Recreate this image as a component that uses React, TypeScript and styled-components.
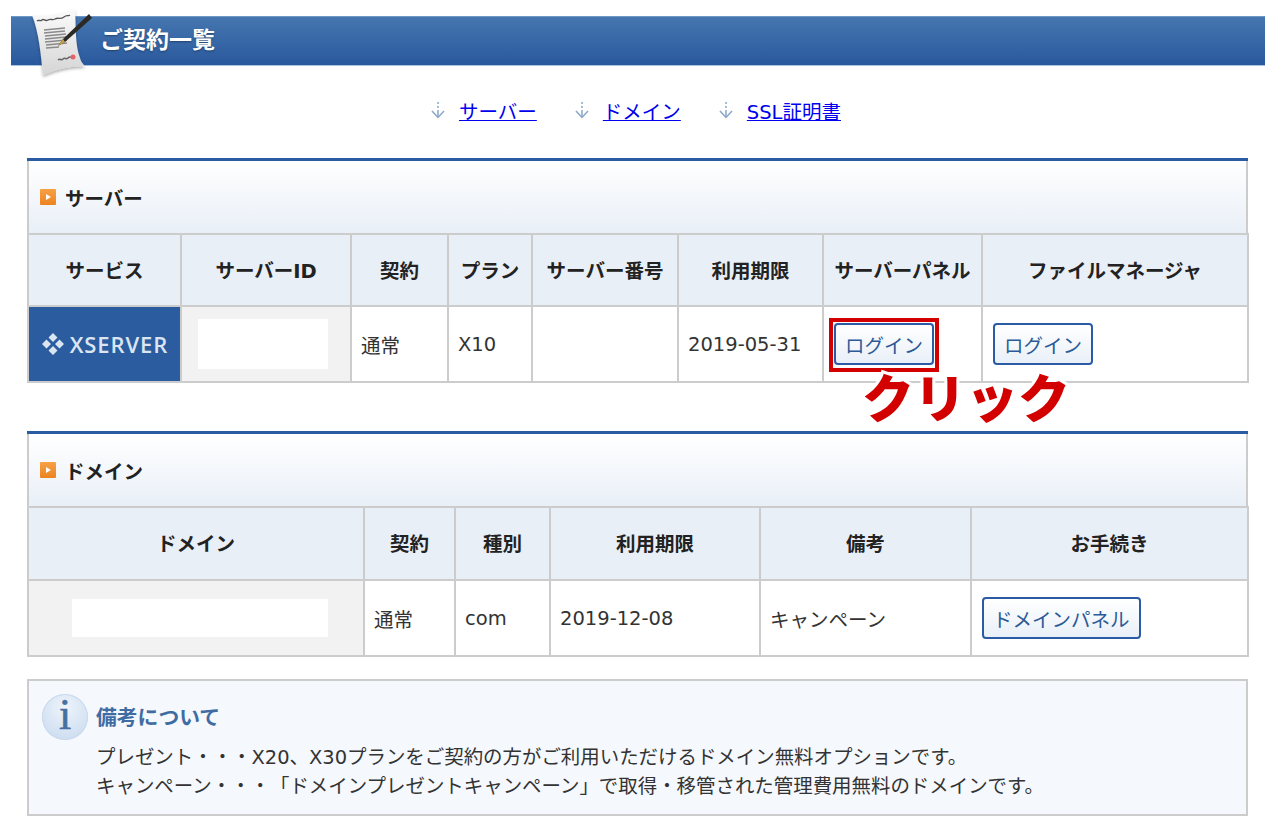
import React, { FC } from 'react';
import styled, { createGlobalStyle } from 'styled-components';

const GlobalStyle = createGlobalStyle`
  html, body {
    margin: 0;
    padding: 0;
    background: #fff;
  }
  body {
    font-family: "DejaVu Sans", "Noto Sans CJK JP", sans-serif;
    font-size: 19.5px;
    color: #333;
    text-spacing-trim: space-all;
  }
`;

const Page = styled.div`
  width: 1280px;
  height: 838px;
  padding-top: 16px;
  box-sizing: border-box;
  overflow: hidden;
`;

const HeaderBand = styled.header`
  position: relative;
  display: flex;
  align-items: center;
  height: 50px;
  margin: 0 15px 0 11px;
  padding: 0 0 6px 89px;
  box-sizing: border-box;
  background: linear-gradient(#4676af, #29599d);
  border-top: 1px solid #6f96c4;
  border-bottom: 1px solid #a9c2de;
`;

const HeaderTitle = styled.h1`
  margin: 0;
  font-size: 23px;
  font-weight: 700;
  color: #fff;
  text-shadow: 0 1px 2px rgba(0, 0, 0, 0.35);
`;

const HeaderIcon = styled.svg`
  position: absolute;
  left: 18px;
  top: -9px;
`;

const AnchorNav = styled.nav`
  display: flex;
  justify-content: center;
  gap: 38px;
  height: 92px;
  padding: 30px 8px 0 0;
  box-sizing: border-box;
`;

const AnchorItem = styled.div`
  display: flex;
  align-items: center;
  gap: 14px;
  height: 28px;
`;

const AnchorLink = styled.a`
  color: #0000ee;
  text-decoration: underline;
  font-size: 19.5px;
`;

const Content = styled.main`
  width: 1221px;
  margin-left: 27px;
`;

const Section = styled.section<{ $gap: number }>`
  margin-bottom: ${({ $gap }) => $gap}px;
  border-top: 3px solid #2a5ba3;
`;

const SectionTitle = styled.div`
  display: flex;
  align-items: center;
  gap: 9px;
  height: 72px;
  padding-left: 11px;
  box-sizing: border-box;
  background: linear-gradient(#fff, #e9eff7);
  border-left: 2px solid #ccc;
  border-right: 2px solid #ccc;
`;

const SectionName = styled.h2`
  margin: 0;
  font-size: 19.5px;
  font-weight: 700;
  color: #222;
`;

const OrangeMark = styled.span`
  display: flex;
  align-items: center;
  justify-content: center;
  width: 16px;
  height: 16px;
  border-radius: 1px;
  background: linear-gradient(#f6a145, #ec8320);
  &::after {
    content: '';
    border-left: 5px solid #fff;
    border-top: 3px solid transparent;
    border-bottom: 3px solid transparent;
  }
`;

const Table = styled.table`
  width: calc(100% - 1px);
  table-layout: fixed;
  border-collapse: collapse;
`;

const HeadCell = styled.th<{ $height: number }>`
  height: ${({ $height }) => $height}px;
  padding: 0 0 2px;
  text-align: center;
  font-size: 19.5px;
  font-weight: 700;
  color: #222;
  background: #e9eff7;
  border: 2px solid #ccc;
`;

const Cell = styled.td<{ $tone?: 'plain' | 'brand' | 'masked' }>`
  position: relative;
  height: 74px;
  padding: 0 9px;
  font-size: 19.5px;
  color: #333;
  white-space: nowrap;
  border: 2px solid #ccc;
  background: ${({ $tone }) =>
    $tone === 'brand' ? '#2a5c9f' : $tone === 'masked' ? '#f2f2f2' : '#fff'};
`;

const Mask = styled.div<{ $width: number; $height: number; $left: number }>`
  width: ${({ $width }) => $width}px;
  height: ${({ $height }) => $height}px;
  margin-left: ${({ $left }) => $left}px;
  background: #fff;
`;

const Logo = styled.div`
  display: flex;
  align-items: center;
  justify-content: center;
  gap: 5px;
  font-family: "Open Sans", sans-serif;
  font-size: 22px;
  font-weight: 600;
  letter-spacing: 0.9px;
  color: #dbe5f1;
`;

const PanelButton = styled.button`
  display: inline-block;
  height: 42px;
  margin-left: 1px;
  padding: 0 9px;
  font-family: inherit;
  font-size: 19.5px;
  color: #2c5a97;
  background: linear-gradient(#fff, #e9f0f8);
  border: 2px solid #2a5ba3;
  border-radius: 4px;
  white-space: nowrap;
`;

const ClickFrame = styled.span`
  position: absolute;
  left: 5px;
  top: 11px;
  width: 102px;
  height: 46px;
  border: 4px solid #d30000;
  pointer-events: none;
`;

const ClickLabel = styled.span`
  position: absolute;
  left: 38px;
  top: 55px;
  z-index: 2;
  font-family: "Noto Sans CJK JP", sans-serif;
  font-size: 52px;
  font-weight: 900;
  line-height: 68px;
  color: #d30000;
  -webkit-text-stroke: 6px #fff;
  paint-order: stroke fill;
`;

const InfoBox = styled.aside`
  display: flex;
  gap: 8px;
  height: 137px;
  padding: 13px 13px 0;
  box-sizing: border-box;
  background: #f5f8fd;
  border: 2px solid #ccc;
`;

const InfoIcon = styled.div`
  flex: none;
  display: flex;
  align-items: center;
  justify-content: center;
  width: 46px;
  height: 46px;
  padding-bottom: 5px;
  box-sizing: border-box;
  border-radius: 50%;
  font-family: "Liberation Serif", serif;
  font-size: 44px;
  font-weight: 400;
  color: #46709f;
  -webkit-text-stroke: 0.6px #46709f;
  background: radial-gradient(circle at 50% 30%, #eef4fb, #c6d8ee);
  box-shadow: inset 0 0 0 1px #c9d9ec;
`;

const InfoBody = styled.div`
  padding-top: 9px;
`;

const InfoTitle = styled.h3`
  margin: 0 0 10px;
  font-size: 20.8px;
  line-height: 30px;
  font-weight: 700;
  color: #3f6ca3;
`;

const InfoText = styled.p`
  margin: 0;
  font-size: 19.45px;
  line-height: 29px;
  color: #333;
  white-space: nowrap;
`;

const ArrowIcon: FC = () => (
  <svg width="14" height="17" viewBox="0 0 14 17" fill="none" stroke="#8ba6c6" strokeWidth="1.5">
    <path d="M7 0v2M7 4v2M7 8v7" />
    <path d="M1 9l6 6.5L13 9" />
  </svg>
);

const DocumentIcon: FC = () => (
  <HeaderIcon width="66" height="72" viewBox="0 0 66 72">
    <defs>
      <linearGradient id="paper" x1="0" y1="0" x2="0" y2="1">
        <stop offset="0" stopColor="#fbfbfb" />
        <stop offset="1" stopColor="#d5d5d5" />
      </linearGradient>
      <filter id="soft" x="-20%" y="-20%" width="140%" height="140%">
        <feDropShadow dx="0" dy="2" stdDeviation="1.5" floodColor="#000" floodOpacity="0.3" />
      </filter>
    </defs>
    <path d="M3 7C16 9 32 6 46 1c1 20 0 36 5 49 1 4 3 6 5 8-14 0-28 3-42 9C12 48 10 24 3 7z" fill="url(#paper)" filter="url(#soft)" />
    <path d="M8 13c2-2 3 1 5-1s3 2 6 0 4 1 7-1 5 1 9-2 3 0 6-2" stroke="#555" strokeWidth="1.4" fill="none" />
    <path d="M15 22l21-2M15 25l21-2M16 28l21-2M16 31l21-2M16 34l22-2M17 37l21-2M17 40l13-1" stroke="#8a8a8a" strokeWidth="1.6" fill="none" />
    <path d="M29 52c2-2 3 1 5-1s3 1 5-1 3 0 4-1" stroke="#666" strokeWidth="1.5" fill="none" />
    <circle cx="44" cy="49" r="2.5" fill="#e8606a" />
    <path d="M60 6L34 31l-5 7 7-4L63 10z" fill="#2b2a26" />
    <path d="M34 31l-5 7 7-4z" fill="#c9a24a" />
  </HeaderIcon>
);

const LogoMark: FC = () => (
  <svg width="24" height="24" viewBox="0 0 24 24" fill="#dbe5f1">
    <path d="M12 1l4.5 4.5L12 10 7.5 5.5zM12 14l4.5 4.5L12 23l-4.5-4.5zM5.5 7.5L10 12l-4.5 4.5L1 12zM18.5 7.5L23 12l-4.5 4.5L14 12z" />
  </svg>
);

type ColumnsProps = { widths: number[] };

const Columns: FC<ColumnsProps> = ({ widths }) => (
  <colgroup>
    {widths.map((w, i) => (
      <col key={i} style={{ width: w }} />
    ))}
  </colgroup>
);

const App: FC = () => (
  <Page>
    <GlobalStyle />
    <HeaderBand>
      <DocumentIcon />
      <HeaderTitle>ご契約一覧</HeaderTitle>
    </HeaderBand>

    <AnchorNav>
      {['サーバー', 'ドメイン', 'SSL証明書'].map((label) => (
        <AnchorItem key={label}>
          <ArrowIcon />
          <AnchorLink href="#">{label}</AnchorLink>
        </AnchorItem>
      ))}
    </AnchorNav>

    <Content>
      <Section $gap={48}>
        <SectionTitle>
          <OrangeMark />
          <SectionName>サーバー</SectionName>
        </SectionTitle>
        <Table>
          <Columns widths={[153, 170, 97, 84, 146, 145, 159, 266]} />
          <thead>
            <tr>
              {['サービス', 'サーバーID', '契約', 'プラン', 'サーバー番号', '利用期限', 'サーバーパネル', 'ファイルマネージャ'].map((h) => (
                <HeadCell key={h} $height={68}>{h}</HeadCell>
              ))}
            </tr>
          </thead>
          <tbody>
            <tr>
              <Cell $tone="brand">
                <Logo>
                  <LogoMark />
                  XSERVER
                </Logo>
              </Cell>
              <Cell $tone="masked">
                <Mask $width={130} $height={50} $left={7} />
              </Cell>
              <Cell>通常</Cell>
              <Cell>X10</Cell>
              <Cell />
              <Cell>2019-05-31</Cell>
              <Cell>
                <PanelButton>ログイン</PanelButton>
                <ClickFrame />
                <ClickLabel>クリック</ClickLabel>
              </Cell>
              <Cell>
                <PanelButton>ログイン</PanelButton>
              </Cell>
            </tr>
          </tbody>
        </Table>
      </Section>

      <Section $gap={22}>
        <SectionTitle>
          <OrangeMark />
          <SectionName>ドメイン</SectionName>
        </SectionTitle>
        <Table>
          <Columns widths={[336, 91, 95, 210, 211, 277]} />
          <thead>
            <tr>
              {['ドメイン', '契約', '種別', '利用期限', '備考', 'お手続き'].map((h) => (
                <HeadCell key={h} $height={69}>{h}</HeadCell>
              ))}
            </tr>
          </thead>
          <tbody>
            <tr>
              <Cell $tone="masked">
                <Mask $width={256} $height={38} $left={34} />
              </Cell>
              <Cell>通常</Cell>
              <Cell>com</Cell>
              <Cell>2019-12-08</Cell>
              <Cell>キャンペーン</Cell>
              <Cell>
                <PanelButton>ドメインパネル</PanelButton>
              </Cell>
            </tr>
          </tbody>
        </Table>
      </Section>

      <InfoBox>
        <InfoIcon>i</InfoIcon>
        <InfoBody>
          <InfoTitle>備考について</InfoTitle>
          <InfoText>プレゼント・・・X20、X30プランをご契約の方がご利用いただけるドメイン無料オプションです。</InfoText>
          <InfoText>キャンペーン・・・「ドメインプレゼントキャンペーン」で取得・移管された管理費用無料のドメインです。</InfoText>
        </InfoBody>
      </InfoBox>
    </Content>
  </Page>
);

export default App;
